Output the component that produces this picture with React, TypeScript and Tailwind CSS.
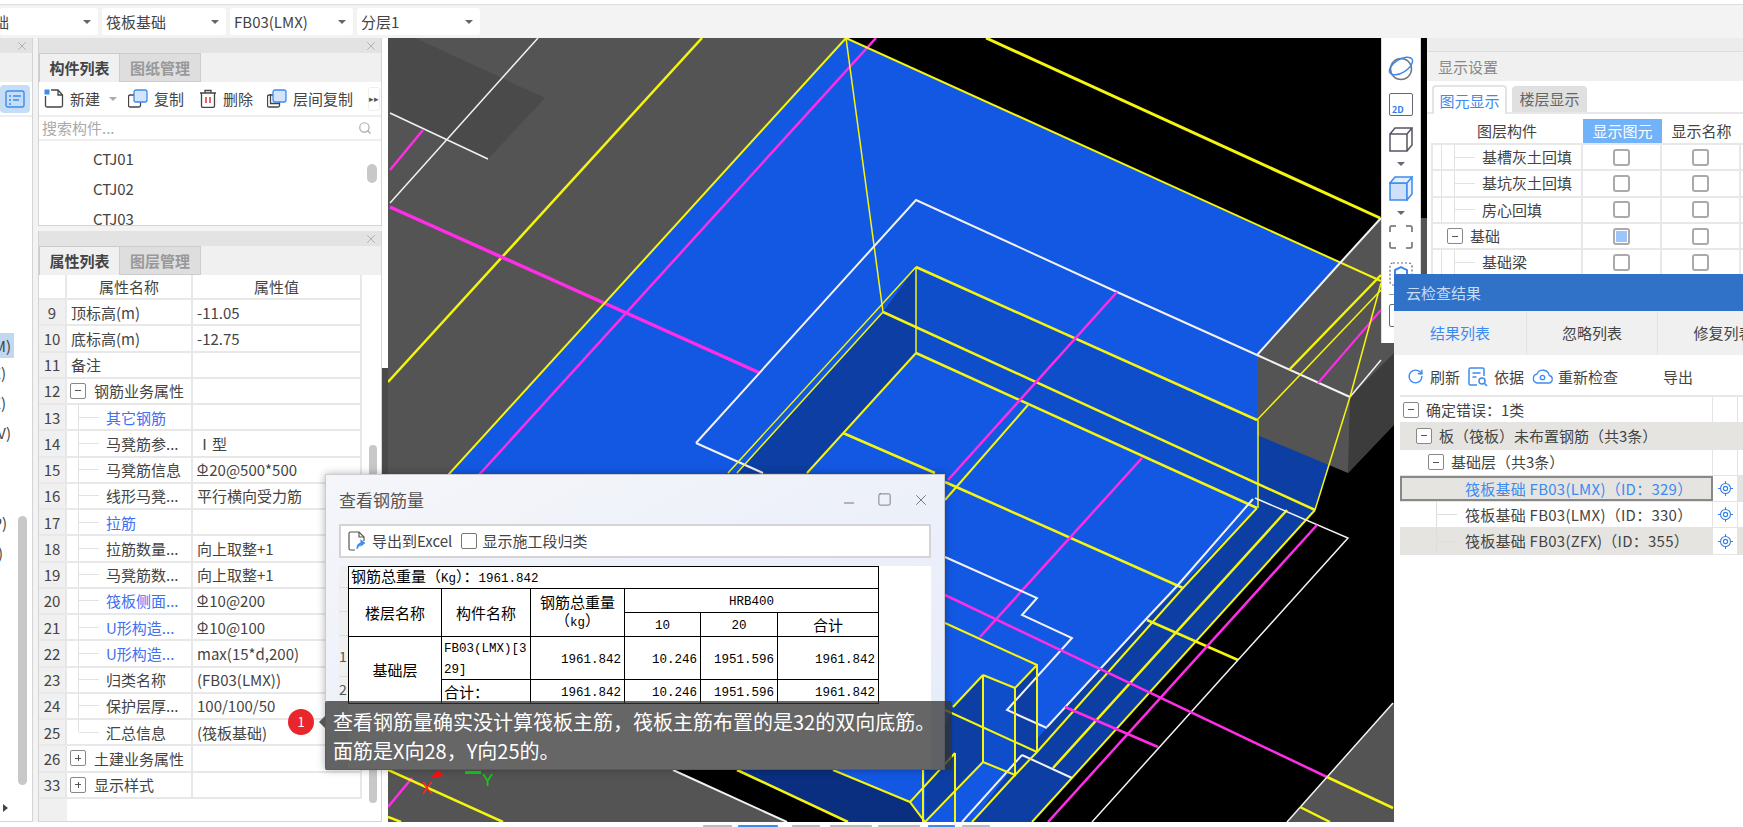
import { LocateFixed, Minus, RotateCw, Search, Square, X } from "lucide-react";
import type { ReactNode } from "react";

type Line = [string, string, number];

const Y = "#f5f510";
const M = "#ff2ee6";
const W = "#f2f2f2";

// page coordinates, the svg viewBox starts at 388,38
const lines: Line[] = [
  // left grey part
  ["538,38 390,203", W, 1.5],
  ["390,113 488,159", W, 1.5],
  ["423,130 390,170", M, 2.5],
  ["702,38 388,382", Y, 2.5],
  ["390,207 760,373", M, 3.5],
  // blue top part
  ["846,38 388,541", Y, 2],
  ["876,38 388,575", M, 2.5],
  ["986,38 1380,218", Y, 3],
  ["846,38 1381,281", Y, 2],
  ["846,38 883,312", Y, 1.5],
  ["696,443 916,200 1117,292 1257,355 1350,397", W, 2],
  ["696,443 763,473", W, 2],
  ["1340,263 1381,218", W, 2],
  ["1257,355 1340,263", W, 2],
  // pit
  ["916,267 728,473", Y, 1.5],
  ["883,312 737,473", Y, 1.5],
  ["916,267 916,353", Y, 1.5],
  ["916,353 807,473", Y, 2],
  ["843,433 935,473", Y, 2.5],
  ["1028,405 945,500", Y, 2],
  ["916,267 1257,420", Y, 2.5],
  ["883,312 1315,510", Y, 2.5],
  ["916,353 1257,508", Y, 2.5],
  ["945,482 1183,588", Y, 2.5],
  ["1117,292 948,480", M, 2.5],
  ["1142,458 980,637", M, 2.5],
  ["1257,420 1381,290", Y, 1.5],
  ["1258,420 1258,508", Y, 1.5],
  ["1350,397 1315,510", Y, 1.5],
  ["1289,370 1381,275", Y, 2.5],
  ["1318,383 1381,310", M, 2],
  ["1350,397 1381,360", W, 1.5],
  ["1350,397 1381,283", Y, 1.5],
  // lower right
  ["1315,510 1032,822", Y, 2],
  ["1287,510 1053,768", Y, 2.5],
  ["1257,508 1183,588 1037,752", Y, 2],
  ["1147,620 1238,660", Y, 2.5],
  ["1253,499 1177,586 1147,618 1047,727", W, 2],
  ["1022,755 962,822", W, 2],
  ["1022,755 1072,778", W, 2],
  ["1255,498 1348,538 1238,660 1092,822", W, 1.5],
  ["945,557 1037,598 1022,615 1072,638 1007,710 1047,728", W, 2],
  ["945,595 1327,777", M, 2.5],
  ["1317,525 1048,822", M, 2.5],
  ["1065,707 1158,747", M, 2.5],
  ["945,623 1037,665 1037,752 1015,775", Y, 2],
  ["1037,665 1015,688", Y, 2],
  ["983,675 1015,688 1015,775 983,762 983,675", Y, 2],
  ["983,675 953,707", Y, 2],
  ["945,710 1037,752", Y, 2],
  ["983,762 925,822", Y, 2],
  ["1015,775 972,822", Y, 2],
  ["955,753 955,822", Y, 2],
  ["955,753 910,802 925,822", Y, 2],
  ["923,770 923,822", Y, 2],
  ["833,770 910,802", Y, 2],
  ["737,770 848,822", Y, 2.5],
  ["673,770 787,822", W, 2],
  // bottom left and bottom right
  ["388,807 412,778", M, 2.5],
  ["388,770 503,822", Y, 2.5],
  ["388,817 401,822", Y, 2.5],
  ["1393,703 1287,822", W, 1.5],
  ["1327,777 1393,808", Y, 2.5],
  ["1300,807 1330,822", Y, 2.5],
];

function Viewport() {
  return (
    <svg viewBox="388 38 1039 784" className="h-full w-full bg-black">
      <polygon points="388,38 846,38 388,541 560,700 673,770 787,822 388,822" fill="#545454" />
      <polygon points="415,38 545,98 488,159 390,113 388,38" fill="#4a4a4a" />
      <polygon points="846,38 1340,263 1257,355 1257,435 1330,462 1315,510 1032,822 848,822 737,770 388,541" fill="#1358e2" />
      <polygon points="1257,435 1330,462 1315,510 1032,822 925,822 1000,600 1183,500" fill="#0c3ea3" />
      <polygon points="737,770 848,822 925,822 910,802 833,770" fill="#0a2f80" />
      <polygon points="916,353 1257,508 1147,620 1022,755 972,822 925,822 830,700 800,480" fill="#1358e2" />
      <polygon points="916,267 1257,420 1258,508 916,353" fill="#0f4ecb" />
      <polygon points="916,267 916,353 807,473 737,473 883,312" fill="#0c3ea3" />
      <polygon points="1037,665 1015,688 1015,775 1037,752" fill="#0c3ea3" />
      <polygon points="983,675 1015,688 1015,775 983,762" fill="#0f4ecb" />
      <polygon points="983,675 953,707 925,770 925,822 983,762" fill="#0c3ea3" />
      <polygon points="1381,218 1340,263 1257,355 1257,435 1348,473 1427,390 1427,218" fill="#545454" />
      <polygon points="1350,397 1348,473 1427,390 1427,320" fill="#3c3c3c" />
      <polygon points="1393,703 1287,822 1427,822 1427,703" fill="#545454" />
      {lines.map(([points, color, width], i) => (
        <polyline key={i} points={points} fill="none" stroke={color} strokeWidth={width} />
      ))}
      <polygon points="430,778 438,770 444,776" fill="#ff1010" />
      <rect x="465" y="771" width="16" height="3" fill="#10d010" />
      <text x="421" y="794" fill="#ff2020" fontSize="17" fontFamily="Liberation Sans">X</text>
      <text x="482" y="786" fill="#10d010" fontSize="17" fontFamily="Liberation Sans">Y</text>
    </svg>
  );
}

function Caret({ className = "border-t-[#666]" }: { className?: string }) {
  return <span className={`h-0 w-0 border-x-[4px] border-t-[4px] border-x-transparent ${className}`} />;
}

function Select({ label, width, textClass = "" }: { label: string; width: string; textClass?: string }) {
  return (
    <div className={`flex h-[27px] items-center justify-between rounded-[3px] bg-white pl-[4px] pr-[7px] ${width}`}>
      <span className={textClass}>{label}</span>
      <Caret />
    </div>
  );
}

function Close({ size = 14 }: { size?: number }) {
  return <X size={size} strokeWidth={1.5} className="text-[#aaa]" />;
}

function PanelTabs({ first, second }: { first: string; second: string }) {
  return (
    <div className="flex h-[29px] bg-[#f0f0f0] font-bold">
      <div className="flex w-[81px] items-center justify-center border border-b-0 border-[#ccc] text-[#444]">{first}</div>
      <div className="flex w-[81px] items-center justify-center border border-l-0 border-[#ccc] bg-[#dedede] text-[#999]">{second}</div>
    </div>
  );
}

function NewIcon() {
  return (
    <svg className="shrink-0" width="20" height="19" viewBox="0 0 20 19" fill="none" stroke="#444" strokeWidth="1.3">
      <path d="M1.5 7v9.5a1.5 1.5 0 0 0 1.5 1.5h14a1.5 1.5 0 0 0 1.5-1.5V6L14 1H7" />
      <path d="M14 1v5h4.5" />
      <rect x="0.5" y="0.5" width="5" height="5" fill="#3d8bf0" stroke="none" />
    </svg>
  );
}

function CopyIcon({ stacked }: { stacked?: boolean }) {
  return (
    <svg className="shrink-0" width="20" height="19" viewBox="0 0 20 19" fill="none" stroke="#444" strokeWidth="1.3">
      <path d="M6 6H2a1.5 1.5 0 0 0-1.5 1.5v9A1.5 1.5 0 0 0 2 18h9a1.5 1.5 0 0 0 1.5-1.5V13" />
      {stacked && <path d="M3.5 5v9.5h9" />}
      <rect x="6" y="1" width="13" height="12" rx="2" fill="#d4e5fb" stroke="#3d8bf0" />
    </svg>
  );
}

function TrashIcon() {
  return (
    <svg className="shrink-0" width="18" height="19" viewBox="0 0 18 19" fill="none" stroke="#444" strokeWidth="1.3">
      <path d="M1 4h16M6 4V1.5h6V4M2.5 4v13a1.5 1.5 0 0 0 1.5 1.5h10a1.5 1.5 0 0 0 1.5-1.5V4" />
      <path d="M7 8v6M11 8v6" stroke="#e0453a" strokeWidth="1.6" />
    </svg>
  );
}

function ExportIcon() {
  return (
    <svg className="shrink-0" width="18" height="20" viewBox="0 0 18 20" fill="none" stroke="#555" strokeWidth="1.2">
      <path d="M7 19H2.500A1.500 1.500 0 0 1 1 17.500V2.500A1.500 1.500 0 0 1 2.500 1H11l5 5v4" />
      <path d="M11 1v5h5" />
      <path d="M9 18c0-4 2-6 5-6M13 9.500l3.500 2.500-3.500 2.500z" stroke="#3d8bf0" fill="#3d8bf0" />
    </svg>
  );
}

type PropRow = { n: number; name: string; val?: ReactNode; kind?: "open" | "closed" | "sub" | "last"; blue?: boolean };

const Rebar = ({ size }: { size: string }) => (
  <>
    <span className="relative -top-[2px] mr-[1px] text-[14px] underline">Φ</span>
    {size}
  </>
);

const propRows: PropRow[] = [
  { n: 9, name: "顶标高(m)", val: "-11.05" },
  { n: 10, name: "底标高(m)", val: "-12.75" },
  { n: 11, name: "备注" },
  { n: 12, name: "钢筋业务属性", kind: "open" },
  { n: 13, name: "其它钢筋", kind: "sub", blue: true },
  { n: 14, name: "马凳筋参...", val: "Ⅰ型", kind: "sub" },
  { n: 15, name: "马凳筋信息", val: <Rebar size="20@500*500" />, kind: "sub" },
  { n: 16, name: "线形马凳...", val: "平行横向受力筋", kind: "sub" },
  { n: 17, name: "拉筋", kind: "sub", blue: true },
  { n: 18, name: "拉筋数量...", val: "向上取整+1", kind: "sub" },
  { n: 19, name: "马凳筋数...", val: "向上取整+1", kind: "sub" },
  { n: 20, name: "筏板侧面...", val: <Rebar size="10@200" />, kind: "sub", blue: true },
  { n: 21, name: "U形构造...", val: <Rebar size="10@100" />, kind: "sub", blue: true },
  { n: 22, name: "U形构造...", val: "max(15*d,200)", kind: "sub", blue: true },
  { n: 23, name: "归类名称", val: "(FB03(LMX))", kind: "sub" },
  { n: 24, name: "保护层厚...", val: "100/100/50", kind: "sub" },
  { n: 25, name: "汇总信息", val: "(筏板基础)", kind: "last" },
  { n: 26, name: "土建业务属性", kind: "closed" },
  { n: 33, name: "显示样式", kind: "closed" },
];

function TreeBox({ open }: { open: boolean }) {
  return (
    <span className="flex h-[16px] w-[16px] shrink-0 items-center justify-center rounded-[2px] border border-[#888] bg-white text-[#555]">
      <span className="relative h-[1px] w-[6px] bg-[#555]">
        {!open && <span className="absolute -top-[2.5px] left-[2.5px] h-[6px] w-[1px] bg-[#555]" />}
      </span>
    </span>
  );
}

function PropName({ row }: { row: PropRow }) {
  if (row.kind === "open" || row.kind === "closed") {
    return (
      <div className="flex h-full items-center pl-[3px]">
        <TreeBox open={row.kind === "open"} />
        <span className="ml-[8px] pt-[1px]">{row.name}</span>
      </div>
    );
  }
  if (row.kind) {
    return (
      <div className="flex h-full items-center pl-[11px]">
        <span className={`w-[1px] bg-[#e2e2e2] ${row.kind === "last" ? "h-1/2 self-start" : "h-full"}`} />
        <span className="h-[1px] w-[20px] bg-[#e2e2e2]" />
        <span className={`ml-[7px] pt-[1px] ${row.blue ? "text-[#3f6ff2]" : ""}`}>{row.name}</span>
      </div>
    );
  }
  return <div className="flex h-full items-center pl-[4px] pt-[1px]">{row.name}</div>;
}

function PropertyPanel() {
  return (
    <div className="flex h-[591px] flex-col border border-t-0 border-[#d4d4d4] bg-white">
      <div className="flex h-[15px] shrink-0 items-center justify-end bg-[#e3e3e3] pr-[3px]">
        <Close />
      </div>
      <PanelTabs first="属性列表" second="图层管理" />
      <div className="flex flex-1">
        <div className="flex w-[323px] flex-col">
          <div className="flex h-[25px] border-b-2 border-[#e8e8e8]">
            <div className="w-[28px] border-r-2 border-[#e8e8e8]" />
            <div className="flex w-[126px] items-center justify-center border-r-2 border-[#e8e8e8]">属性名称</div>
            <div className="flex flex-1 items-center justify-center border-r-2 border-[#e8e8e8]">属性值</div>
          </div>
          {propRows.map((row) => (
            <div key={row.n} className="flex h-[26.26px] border-b-2 border-[#e8e8e8]">
              <div className="flex w-[28px] items-center justify-center border-r-2 border-[#e8e8e8] bg-[#f0f0f0] pt-[1px]">{row.n}</div>
              <div className="w-[126px] border-r-2 border-[#e8e8e8]">
                <PropName row={row} />
              </div>
              <div className="flex flex-1 items-center border-r-2 border-[#e8e8e8] pl-[4px] pt-[1px]">
                <span>{row.val}</span>
              </div>
            </div>
          ))}
          <div className="w-[28px] flex-1 bg-[#f0f0f0]" />
        </div>
        <div className="flex-1 pl-[7px] pr-[4px] pt-[170px]">
          <div className="h-[358px] rounded-full bg-[#c8c8c8]" />
        </div>
      </div>
    </div>
  );
}

function ComponentPanel() {
  return (
    <div className="flex h-[188px] flex-col border border-t-0 border-[#d4d4d4] bg-white">
      <div className="flex h-[15px] shrink-0 items-center justify-end bg-[#e3e3e3] pr-[3px]">
        <Close />
      </div>
      <PanelTabs first="构件列表" second="图纸管理" />
      <div className="flex h-[35px] shrink-0 items-center border-b-2 border-[#eee] pl-[5px]">
        <NewIcon />
        <span className="ml-[6px]">新建</span>
        <span className="ml-[9px] mr-[11px]">
          <Caret className="block border-t-[#aaa]" />
        </span>
        <CopyIcon />
        <span className="ml-[6px]">复制</span>
        <span className="ml-[15px]" />
        <TrashIcon />
        <span className="ml-[6px]">删除</span>
        <span className="ml-[14px]" />
        <CopyIcon stacked />
        <span className="ml-[6px]">层间复制</span>
        <span className="ml-[15px] flex h-[24px] w-[12px] shrink-0 items-center justify-center rounded-[3px] border border-[#eee] text-[9px] text-[#555]">▸▸</span>
      </div>
      <div className="flex h-[24px] shrink-0 items-center justify-between border-b-2 border-[#eee] pl-[3px] pr-[9px] text-[#aaa]">
        <span>搜索构件...</span>
        <Search size={14} />
      </div>
      <div className="flex min-h-0 flex-1 overflow-hidden">
        <div className="flex-1 pl-[54px] pt-[3px]">
          {["CTJ01", "CTJ02", "CTJ03"].map((c) => (
            <div key={c} className="flex h-[30px] items-center">{c}</div>
          ))}
        </div>
        <div className="w-[14px] pr-[4px] pt-[23px]">
          <div className="h-[19px] rounded-full bg-[#c8c8c8]" />
        </div>
      </div>
    </div>
  );
}

function LeftStrip() {
  return (
    <div className="flex h-full w-[33px] shrink-0 flex-col overflow-hidden border-r border-b border-[#d4d4d4] bg-white">
      <div className="flex h-[15px] shrink-0 items-center justify-end bg-[#e3e3e3] pr-[3px]">
        <Close />
      </div>
      <div className="h-[29px] shrink-0 bg-[#f0f0f0]" />
      <div className="flex h-[35px] shrink-0 items-center border-b-2 border-[#eee]">
        <div className="flex h-[28px] w-[30px] items-center justify-center rounded-[4px] bg-[#c6ddf6]">
          <svg width="20" height="18" viewBox="0 0 20 18" fill="none" stroke="#3d8bf0" strokeWidth="1.4">
            <rect x="1" y="1" width="18" height="16" rx="2" />
            <path d="M4 6h2M8 6h8M4 10h2M8 10h6M4 14h2" />
          </svg>
        </div>
      </div>
      <div className="flex min-h-0 flex-1">
        {/* names run off the left edge of the window */}
        <div className="w-[17px] pt-[216px]">
          <div className="flex h-[25px] w-[14px] items-center justify-end bg-[#c0d8f0] pr-[3px]">M)</div>
          <div className="flex h-[30px] w-[6px] items-center justify-end">X)</div>
          <div className="flex h-[30px] w-[6px] items-center justify-end">X)</div>
          <div className="flex h-[30px] w-[11px] items-center justify-end">V)</div>
          <div className="h-[60px]" />
          <div className="flex h-[30px] w-[7px] items-center justify-end">P)</div>
          <div className="flex h-[30px] w-[3px] items-center justify-end">)</div>
          <div className="h-[229px]" />
          <span className="ml-[3px] inline-block h-0 w-0 border-y-[4px] border-l-[5px] border-y-transparent border-l-[#444]" />
        </div>
        <div className="pl-[1px] pt-[399px]">
          <div className="h-[269px] w-[9px] rounded-full bg-[#c8c8c8]" />
        </div>
      </div>
    </div>
  );
}

function RightTools() {
  return (
    <div className="absolute right-[6px] top-0 flex h-[305px] w-[40px] flex-col items-center border-x border-[#ddd] bg-white pt-[17px]">
      <svg className="shrink-0" width="26" height="26" viewBox="0 0 26 26" fill="none" strokeWidth="1.5">
        <circle cx="13" cy="14" r="10.500" stroke="#777" />
        <ellipse cx="13" cy="11" rx="13" ry="6.500" transform="rotate(-32 13 11)" stroke="#3d8bf0" />
      </svg>
      <div className="mt-[12px] flex h-[23px] w-[24px] shrink-0 items-end rounded-[2px] border-[1.500px] border-[#667] pb-[1px] pl-[2px] text-[9px] font-bold leading-none text-[#2f7ee8]">2D</div>
      <svg className="mt-[11px] shrink-0" width="24" height="25" viewBox="0 0 24 25" fill="none" stroke="#556" strokeWidth="1.500">
        <path d="M1 7h17v17H1zM1 7l5-6h17l-5 6M23 1v17l-5 6" />
      </svg>
      <span className="mt-[10px]"><Caret className="block border-t-[#667]" /></span>
      <svg className="mt-[10px] shrink-0" width="24" height="25" viewBox="0 0 24 25" fill="none" stroke="#3d8bf0" strokeWidth="1.500">
        <path d="M1 7h17v17H1z" fill="#cfe1fa" />
        <path d="M1 7l5-6h17l-5 6zM23 1v17l-5 6V7z" fill="#e4eefc" />
      </svg>
      <span className="mt-[10px]"><Caret className="block border-t-[#667]" /></span>
      <svg className="mt-[10px] shrink-0" width="24" height="24" viewBox="0 0 24 24" fill="none" stroke="#667" strokeWidth="1.500">
        <path d="M1 7V2.500A1.500 1.500 0 0 1 2.500 1H7M17 1h4.500A1.500 1.500 0 0 1 23 2.500V7M23 17v4.500a1.500 1.500 0 0 1-1.500 1.500H17M7 23H2.500A1.500 1.500 0 0 1 1 21.500V17" />
      </svg>
      <svg className="mt-[13px] shrink-0" width="24" height="24" viewBox="0 0 24 24" fill="none" stroke="#667" strokeWidth="1.200" strokeDasharray="2 2">
        <rect x="1" y="1" width="22" height="22" rx="3" />
        <path d="M6 8l6-3 6 3v8l-6 3-6-3z" stroke="#3d8bf0" strokeWidth="2" strokeDasharray="none" />
      </svg>
      <div className="mt-[8px] h-[1px] w-[24px] shrink-0 bg-[#999]" />
      <div className="mt-[9px] h-[23px] w-[24px] shrink-0 rounded-[2px] border border-[#667]" />
    </div>
  );
}

function Check({ on }: { on?: boolean }) {
  return (
    <span className="flex h-[17px] w-[17px] items-center justify-center rounded-[3px] border-2 border-[#aaa] bg-white">
      {on && <span className="h-[11px] w-[11px] bg-[#9cc6fb]" />}
    </span>
  );
}

const layerRows = [
  { name: "基槽灰土回填", tree: true },
  { name: "基坑灰土回填", tree: true },
  { name: "房心回填", tree: true },
  { name: "基础", tree: false, on: true },
  { name: "基础梁", tree: true },
  { name: "", tree: true },
];

function DisplayPanel() {
  return (
    <div className="flex h-full w-[316px] shrink-0 flex-col overflow-hidden bg-white">
      <div className="h-[14px] shrink-0 border-b border-[#ddd] bg-[#ececec]" />
      <div className="flex h-[29px] shrink-0 items-center bg-[#f0f0f0] pl-[11px] text-[#888]">显示设置</div>
      <div className="flex h-[33px] shrink-0 items-end gap-[5px] border-b-2 border-[#e8e8e8] pl-[5px]">
        <div className="-mb-[2px] flex h-[29px] w-[75px] items-center justify-center rounded-t-[4px] border-2 border-b-0 border-[#e4e4e4] bg-white text-[#3d8bf0]">图元显示</div>
        <div className="flex h-[26px] w-[75px] items-center justify-center rounded-t-[4px] bg-[#e0e0e0] text-[#666]">楼层显示</div>
      </div>
      <div className="ml-[4px] mt-[5px]">
        <div className="flex h-[26px] border-b-2 border-[#e8e8e8]">
          <div className="flex w-[152px] items-center justify-center">图层构件</div>
          <div className="flex w-[79px] items-center justify-center bg-[#72b2f8] text-white">显示图元</div>
          <div className="flex w-[79px] items-center justify-center">显示名称</div>
        </div>
        {layerRows.map((row, i) => (
          <div key={i} className="flex h-[26.300px] border-b-2 border-[#e8e8e8]">
            <div className="flex w-[152px] items-center border-x-2 border-[#e8e8e8]">
              {row.tree ? (
                <>
                  <span className="ml-[8px] h-full w-[1px] bg-[#e2e2e2]" />
                  <span className="ml-[12px] h-full w-[1px] bg-[#e2e2e2]" />
                  <span className="h-[1px] w-[20px] bg-[#e2e2e2]" />
                  <span className="ml-[7px]">{row.name}</span>
                </>
              ) : (
                <>
                  <span className="ml-[14px]"><TreeBox open /></span>
                  <span className="ml-[7px]">{row.name}</span>
                </>
              )}
            </div>
            <div className="flex w-[79px] items-center justify-center border-r-2 border-[#e8e8e8]"><Check on={row.on} /></div>
            <div className="flex w-[79px] items-center justify-center border-r-2 border-[#e8e8e8]"><Check /></div>
          </div>
        ))}
      </div>
    </div>
  );
}

function Mono({ children }: { children: ReactNode }) {
  return <span className="font-['Liberation_Mono',monospace] text-[12.500px]">{children}</span>;
}

const rebarCell = "border-[1.500px] border-black px-[3px] text-right align-middle";
const headCell = "border-[1.500px] border-black text-center align-middle";

function RebarDialog() {
  return (
    <div className="absolute left-[325px] top-[474px] flex h-[296px] w-[620px] flex-col border border-[#ccc] bg-gradient-to-br from-[#f5f6fa] to-[#e5ebf9] px-[13px] shadow-[0_0_8px_rgba(0,0,0,0.3)]">
      <div className="flex h-[49px] shrink-0 items-center justify-between">
        <span className="text-[17px] text-[#555]">查看钢筋量</span>
        <div className="flex items-center gap-[20px] pr-[1px] text-[#777]">
          <Minus size={16} strokeWidth={1.500} className="mt-[6px]" />
          <Square size={15} strokeWidth={1.500} />
          <X size={18} strokeWidth={1.300} />
        </div>
      </div>
      <div className="flex h-[34px] shrink-0 items-center border-2 border-[#d4d4d4] bg-white pl-[7px]">
        <ExportIcon />
        <span className="ml-[6px]">导出到Excel</span>
        <span className="ml-[9px] h-[16px] w-[16px] rounded-[2px] border border-[#777]" />
        <span className="ml-[5px]">显示施工段归类</span>
      </div>
      <div className="mt-[8px] flex min-h-0 flex-1 overflow-hidden bg-white text-black">
        <div className="w-[9px] shrink-0 bg-[#f0f0f0] text-[14px] text-[#555]">
          <div className="h-[22px] border-b border-[#ddd]" />
          <div className="h-[24px] border-b border-[#ddd]" />
          <div className="h-[24px] border-b border-[#ddd]" />
          <div className="flex h-[41px] items-center border-b border-[#ddd]">1</div>
          <div className="flex h-[24px] items-center">2</div>
        </div>
        <table className="h-[136px] w-[530px] table-fixed border-collapse self-start leading-[18px]">
          <colgroup>
            <col className="w-[93px]" />
            <col className="w-[89px]" />
            <col className="w-[94px]" />
            <col className="w-[76px]" />
            <col className="w-[77px]" />
            <col className="w-[101px]" />
          </colgroup>
          <tbody>
            <tr className="h-[22px]">
              <td colSpan={6} className="border-[1.500px] border-black px-[2px]">
                钢筋总重量（<Mono>Kg</Mono>）：<Mono>1961.842</Mono>
              </td>
            </tr>
            <tr className="h-[24px]">
              <td rowSpan={2} className={headCell}>楼层名称</td>
              <td rowSpan={2} className={headCell}>构件名称</td>
              <td rowSpan={2} className={headCell}>钢筋总重量<br />（<Mono>kg</Mono>）</td>
              <td colSpan={3} className={headCell}><Mono>HRB400</Mono></td>
            </tr>
            <tr className="h-[24px]">
              <td className={headCell}><Mono>10</Mono></td>
              <td className={headCell}><Mono>20</Mono></td>
              <td className={headCell}>合计</td>
            </tr>
            <tr className="h-[41px]">
              <td rowSpan={2} className={headCell}>基础层</td>
              <td className="whitespace-normal break-all border-[1.500px] border-black px-[2px]"><Mono>FB03(LMX)[329]</Mono></td>
              <td className={rebarCell}><Mono>1961.842</Mono></td>
              <td className={rebarCell}><Mono>10.246</Mono></td>
              <td className={rebarCell}><Mono>1951.596</Mono></td>
              <td className={rebarCell}><Mono>1961.842</Mono></td>
            </tr>
            <tr className="h-[24px]">
              <td className="border-[1.500px] border-black px-[2px]">合计：</td>
              <td className={rebarCell}><Mono>1961.842</Mono></td>
              <td className={rebarCell}><Mono>10.246</Mono></td>
              <td className={rebarCell}><Mono>1951.596</Mono></td>
              <td className={rebarCell}><Mono>1961.842</Mono></td>
            </tr>
          </tbody>
        </table>
      </div>
    </div>
  );
}

function NoteTip() {
  return (
    <>
      <div className="absolute left-[288px] top-[709px] flex h-[26px] w-[26px] items-center justify-center rounded-full bg-[#e8262c] text-[13px] text-white">1</div>
      <div className="absolute left-[319px] top-[716px] h-0 w-0 border-y-[6px] border-r-[6px] border-y-transparent border-r-[#555]" />
      <div className="absolute left-[325px] top-[701px] h-[69px] w-[627px] rounded-[2px] bg-[#333333]/75 pl-[8px] pt-[6px] text-[20px] leading-[29px] text-white">
        <div>查看钢筋量确实没计算筏板主筋，筏板主筋布置的是32的双向底筋。</div>
        <div>面筋是X向28，Y向25的。</div>
      </div>
    </>
  );
}

function CloudTarget() {
  return <LocateFixed size={17} strokeWidth={1.500} className="text-[#2f7ee8]" />;
}

const checkRows = [
  { label: "确定错误：1类", pad: "pl-[3px]", box: true, grey: false },
  { label: "板（筏板）未布置钢筋（共3条）", pad: "pl-[16px]", box: true, grey: true },
  { label: "基础层（共3条）", pad: "pl-[28px]", box: true, grey: false },
  { label: "筏板基础 FB03(LMX)（ID：329）", pad: "pl-[63px]", selected: true, target: true, grey: true },
  { label: "筏板基础 FB03(LMX)（ID：330）", pad: "pl-[36px]", guide: true, target: true, grey: false },
  { label: "筏板基础 FB03(ZFX)（ID：355）", pad: "pl-[36px]", guide: true, target: true, grey: true },
];

function CloudPanel() {
  return (
    <div className="absolute left-[1394px] top-[274px] flex h-[553px] w-[349px] flex-col overflow-hidden bg-white">
      <div className="flex h-[37px] shrink-0 items-center bg-[#2f72c8] pl-[12px] text-[#c8dcf5]">云检查结果</div>
      <div className="flex h-[44px] shrink-0 bg-[#f0f0f0]">
        <div className="flex w-[133px] shrink-0 items-center justify-center border-r border-[#e2e2e2] text-[#3d8bf0]">结果列表</div>
        <div className="flex w-[131px] shrink-0 items-center justify-center border-r border-[#e2e2e2]">忽略列表</div>
        <div className="flex w-[131px] shrink-0 items-center justify-center">修复列表</div>
      </div>
      <div className="flex h-[41px] shrink-0 items-center pl-[13px] pt-[2px]">
        <RotateCw size={17} strokeWidth={2} className="text-[#3d8bf0]" />
        <span className="ml-[6px]">刷新</span>
        <svg className="ml-[8px]" width="20" height="20" viewBox="0 0 20 20" fill="none" stroke="#3d8bf0" strokeWidth="1.500">
          <path d="M9 18H2.500A1.500 1.500 0 0 1 1 16.500v-14A1.500 1.500 0 0 1 2.500 1h12A1.500 1.500 0 0 1 16 2.500V9" />
          <path d="M4.500 6h8M4.500 10h4" />
          <circle cx="14" cy="14" r="3" />
          <path d="M16 16l3 3" />
        </svg>
        <span className="ml-[6px]">依据</span>
        <svg className="ml-[8px]" width="21" height="15" viewBox="0 0 21 15" fill="none" stroke="#3d8bf0" strokeWidth="1.300">
          <path d="M5 14h11.500a3.800 3.800 0 0 0 .8-7.500A6.500 6.500 0 0 0 5 5a4.600 4.600 0 0 0 0 9z" />
          <circle cx="10.500" cy="8.500" r="2.200" />
        </svg>
        <span className="ml-[5px]">重新检查</span>
        <span className="ml-[45px]">导出</span>
      </div>
      <div className="-mt-[1px] ml-[6px] border-t-2 border-[#e8e8e8]">
        {checkRows.map((row) => (
          <div key={row.label} className={`flex h-[26.300px] border-b border-[#e4e4e4] ${row.grey ? "bg-[#e6e4e0]" : "bg-white"}`}>
            <div className={`flex w-[313px] shrink-0 items-center ${row.pad} ${row.selected ? "border-2 border-[#888] text-[#3d8bf0]" : "border-r border-[#e4e4e4]"}`}>
              {row.box && <TreeBox open />}
              {row.guide && (
                <>
                  <span className="h-full w-[1px] bg-[#dedede]" />
                  <span className="mr-[8px] h-[1px] w-[20px] bg-[#dedede]" />
                </>
              )}
              <span className={row.box ? "ml-[7px]" : "tracking-[0.25px]"}>{row.label}</span>
            </div>
            <div className={`flex w-[25px] shrink-0 items-center justify-center border-r border-[#e4e4e4] ${row.target || row.selected ? "bg-white" : ""}`}>
              {row.target && <CloudTarget />}
            </div>
          </div>
        ))}
      </div>
    </div>
  );
}

const footerTabs = [
  { w: "ml-[703px] w-[29px]", c: "bg-[#bbb]" },
  { w: "ml-[6px] w-[40px]", c: "bg-[#3d8bf0]" },
  { w: "ml-[14px] w-[28px]", c: "bg-[#bbb]" },
  { w: "ml-[10px] w-[42px]", c: "bg-[#bbb]" },
  { w: "ml-[6px] w-[42px]", c: "bg-[#bbb]" },
  { w: "ml-[8px] w-[27px]", c: "bg-[#3d8bf0]" },
  { w: "ml-[7px] w-[28px]", c: "bg-[#bbb]" },
];

export default function App() {
  return (
    <div className="relative flex h-[827px] w-[1743px] flex-col overflow-hidden whitespace-nowrap bg-[#f3f3f3] font-['Noto_Sans_CJK_SC','Liberation_Sans',sans-serif] text-[15px] leading-[18px] text-[#444]">
      <div className="flex h-[38px] shrink-0 flex-col">
        <div className="h-[5px] border-b border-[#ddd] bg-white" />
        <div className="flex gap-[4px] pt-[3px]">
          <Select label="础" width="w-[98px]" textClass="-ml-[10px]" />
          <Select label="筏板基础" width="w-[124px]" />
          <Select label="FB03(LMX)" width="w-[123px]" />
          <Select label="分层1" width="w-[123px]" />
        </div>
      </div>

      <div className="flex h-[784px] shrink-0">
        <LeftStrip />
        <div className="ml-[5px] flex w-[344px] shrink-0 flex-col gap-[5px]">
          <ComponentPanel />
          <PropertyPanel />
        </div>
        <div className="flex w-[6px] shrink-0 flex-col">
          <div className="h-[330px] bg-white" />
          <div className="h-[170px] bg-[#4a4a4a]" />
          <div className="flex-1 bg-white" />
        </div>
        <div className="relative w-[1039px] shrink-0">
          <Viewport />
          <RightTools />
        </div>
        <DisplayPanel />
      </div>

      <div className="flex flex-1 items-end bg-white">
        {footerTabs.map((t, i) => (
          <span key={i} className={`h-[2px] rounded-t-[1px] ${t.w} ${t.c}`} />
        ))}
      </div>

      <RebarDialog />
      <NoteTip />
      <CloudPanel />
    </div>
  );
}
